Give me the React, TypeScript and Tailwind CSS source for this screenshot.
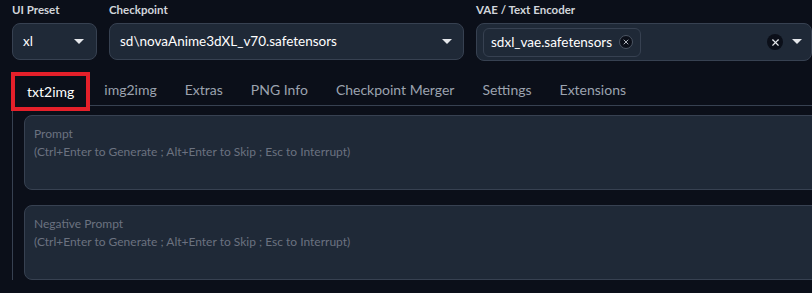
import { X } from "lucide-react";

const tabs = [
  "txt2img",
  "img2img",
  "Extras",
  "PNG Info",
  "Checkpoint Merger",
  "Settings",
  "Extensions",
];

const Caret = () => (
  <svg width="10" height="6" viewBox="0 0 10 6" className="shrink-0">
    <path d="M0 0 L10 0 L5 5 Z" fill="#e5e7eb" />
  </svg>
);

const Field = ({
  label,
  width,
  children,
}: {
  label: string;
  width: string;
  children: React.ReactNode;
}) => (
  <div className={`flex flex-col gap-[4px] ${width}`}>
    <span className="text-[11.5px] font-bold leading-[18px] text-[#d1d5db]">
      {label}
    </span>
    {children}
  </div>
);

const PromptBox = ({ label }: { label: string }) => (
  <div className="h-[75px] rounded-lg border border-[#374151] bg-[#1f2937] px-[9px] pt-[9px] text-[12px] leading-[18px] text-[#6b7280]">
    <div>{label}</div>
    <div>(Ctrl+Enter to Generate ; Alt+Enter to Skip ; Esc to Interrupt)</div>
  </div>
);

export default function App() {
  return (
    <div
      className="h-[293px] w-[812px] overflow-hidden bg-[#0b0f19] pl-3 pt-[1px]"
      style={{ fontFamily: "Lato, 'Noto Sans', sans-serif" }}
    >
      <div className="flex gap-3">
        <Field label="UI Preset" width="w-[85px]">
          <div className="flex h-[37px] items-center justify-between rounded-lg border border-[#374151] bg-[#1f2937] pl-[10px] pr-[12px] text-[13.5px] text-white">
            <span>xl</span>
            <Caret />
          </div>
        </Field>
        <Field label="Checkpoint" width="w-[355px]">
          <div className="flex h-[37px] items-center justify-between rounded-lg border border-[#374151] bg-[#1f2937] pl-[10px] pr-[11px] text-[13.5px] text-white">
            <span>sd\novaAnime3dXL_v70.safetensors</span>
            <Caret />
          </div>
        </Field>
        <Field label="VAE / Text Encoder" width="w-[336px]">
          <div className="flex h-[38px] items-center justify-between rounded-lg border border-[#374151] bg-[#1f2937] pl-[6px] pr-[9px] text-[13.5px] text-white">
            <div className="flex h-[29px] items-center gap-[7px] rounded-md border border-[#374151] bg-[#1f2937] pl-[7px] pr-[7px]">
              <span>sdxl_vae.safetensors</span>
              <span className="flex h-[14px] w-[14px] items-center justify-center rounded-full border border-[#4b5563] bg-[#0b0f19]">
                <X size={8} strokeWidth={2.5} className="text-[#d1d5db]" />
              </span>
            </div>
            <div className="flex items-center gap-[9px]">
              <span className="flex h-[16px] w-[16px] items-center justify-center rounded-full bg-[#0b0f19]">
                <X size={11} strokeWidth={2.5} className="text-[#e5e7eb]" />
              </span>
              <Caret />
            </div>
          </div>
        </Field>
      </div>

      <div className="mt-[12px] flex h-[33px] w-[830px] items-stretch">
        {tabs.map((t, i) =>
          i === 0 ? (
            <div
              key={t}
              className="-ml-px -mt-px flex h-[39px] items-center border-4 border-[#e5202a] bg-[#0b0f19] px-[12px] text-[14px] text-white"
            >
              {t}
            </div>
          ) : (
            <div
              key={t}
              className="flex items-center border-b border-[#374151] px-[14px] text-[14px] text-[#9ca3af]"
            >
              {t}
            </div>
          )
        )}
        <div className="flex-1 border-b border-[#374151]" />
      </div>

      <div className="flex w-[830px] flex-col gap-[15px] border-l border-[#374151] pl-[11px] pt-[9px]">
        <PromptBox label="Prompt" />
        <PromptBox label="Negative Prompt" />
      </div>
    </div>
  );
}
